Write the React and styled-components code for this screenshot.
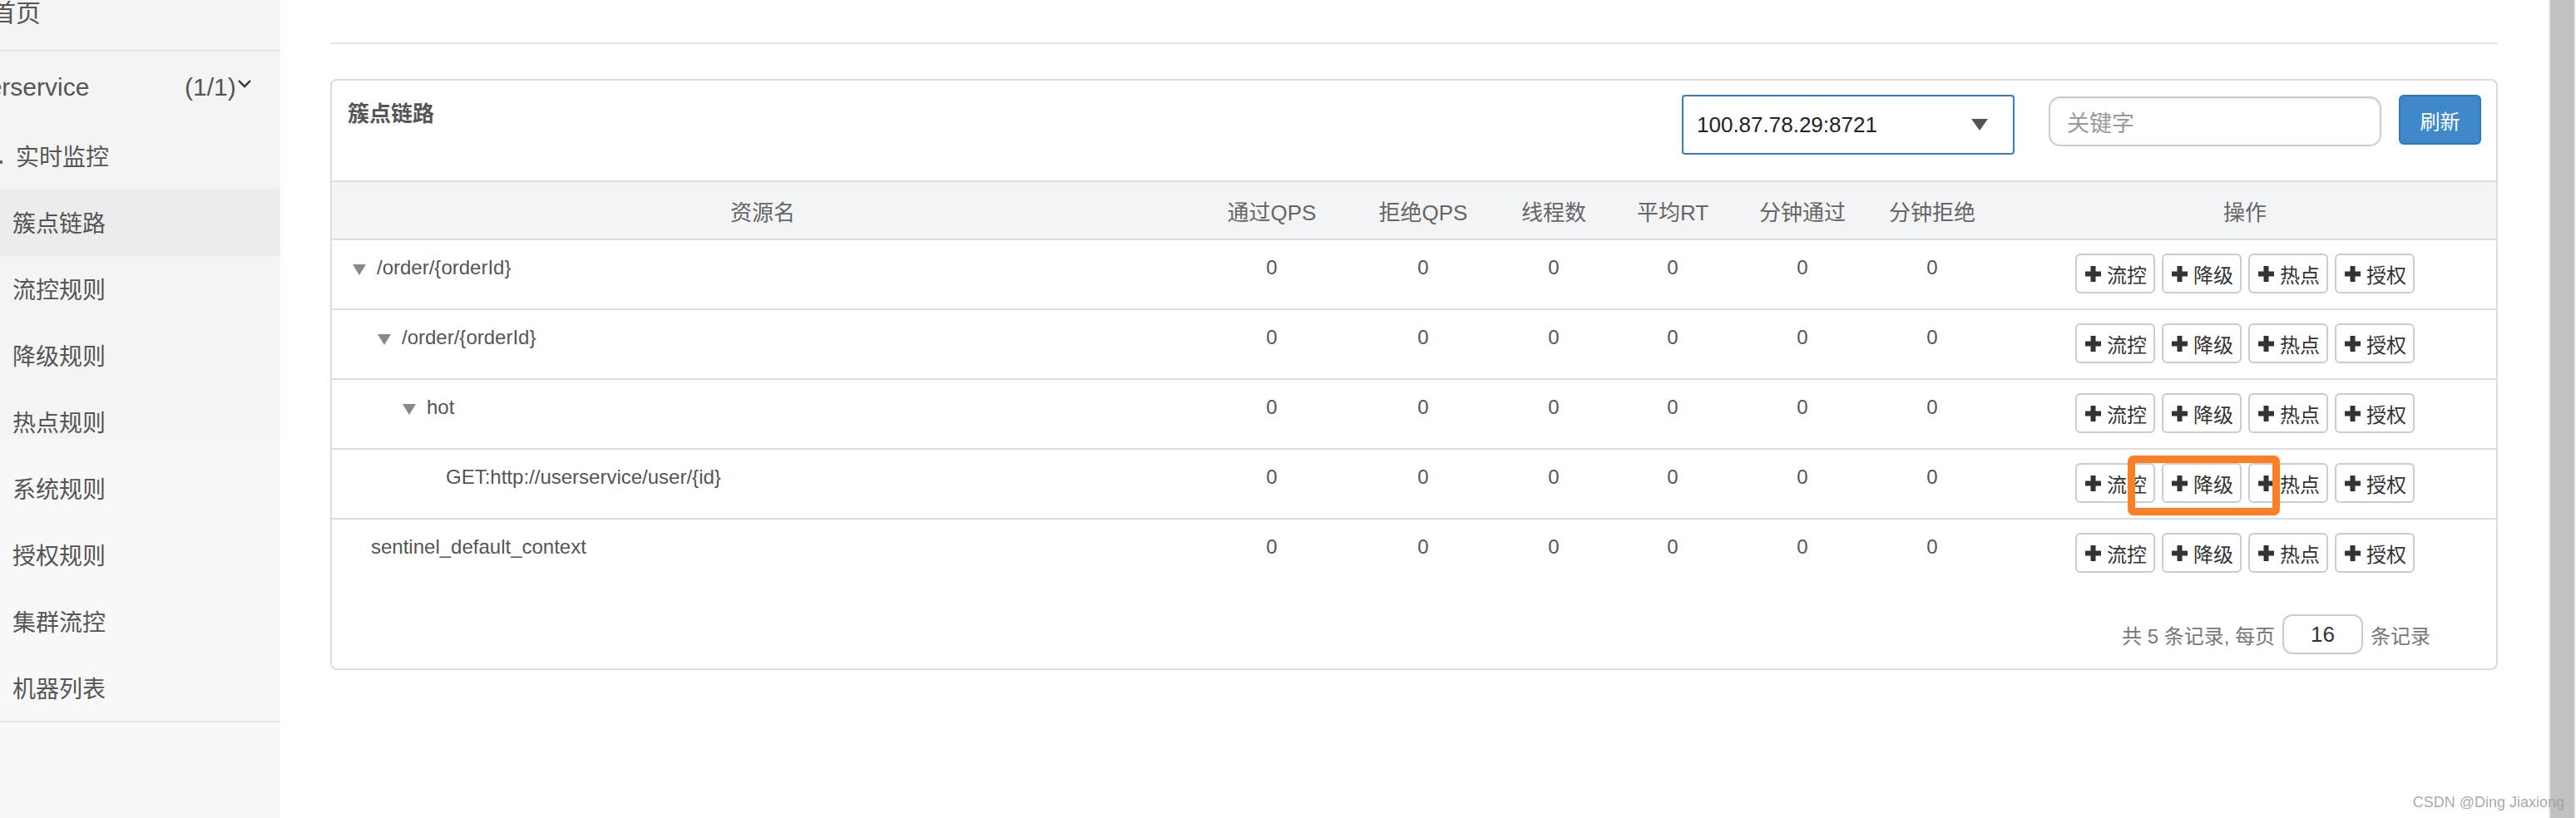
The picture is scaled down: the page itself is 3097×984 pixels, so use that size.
import React from "react";
import styled, { createGlobalStyle } from "styled-components";

const GlobalStyle = createGlobalStyle`
  html, body {
    margin: 0;
    padding: 0;
    width: 3097px;
    height: 984px;
    overflow: hidden;
    background: #ffffff;
  }
  * { box-sizing: border-box; }
  body {
    font-family: "Liberation Sans", "Noto Sans CJK SC", sans-serif;
    color: #555;
  }
`;

const FONT = `"Liberation Sans", "Noto Sans CJK SC", sans-serif`;

const Page = styled.div`
  position: relative;
  display: flex;
  width: 3097px;
  height: 984px;
  overflow: hidden;
  font-family: ${FONT};
`;

/* ---------------- Sidebar ---------------- */
const Sidebar = styled.aside`
  width: 337px;
  flex: none;
  overflow: hidden;
  background: linear-gradient(to bottom, #f4f4f4 0, #f4f4f4 528px, #f8f8f8 528px);
  display: flex;
  flex-direction: column;
`;

const HomeRow = styled.div`
  height: 60px;
  flex: none;
  font-size: 30px;
  line-height: 32px;
  color: #555;
  margin-left: -11px;
  white-space: nowrap;
`;

const Divider = styled.div`
  height: 2px;
  flex: none;
  background: #e5e5e5;
`;

const ServiceRow = styled.div`
  height: 85px;
  flex: none;
  display: flex;
  align-items: flex-start;
  padding-top: 25px;
  font-size: 30px;
  line-height: 36px;
  color: #555;
  white-space: nowrap;
`;

const ServiceName = styled.span`
  width: 268px;
  margin-left: -46px;
  flex: none;
`;

const ServiceCount = styled.span`
  flex: none;
`;

const Chevron = styled.svg`
  flex: none;
  margin-top: 8px;
  margin-left: 1px;
`;

const NavItem = styled.div`
  height: 80px;
  flex: none;
  display: flex;
  align-items: center;
  padding-left: ${(p) => (p.$icon ? 0 : 15)}px;
  font-size: 28px;
  color: #555;
  background: ${(p) => (p.$active ? "#ececec" : "transparent")};
  white-space: nowrap;
`;

const IconStub = styled.span`
  width: 3px;
  height: 4px;
  background: #666;
  margin-top: 16px;
  margin-right: 16px;
  flex: none;
`;

/* ---------------- Main ---------------- */
const Main = styled.main`
  flex: 1;
  min-width: 0;
  background: #fff;
  padding: 51px 61px 0 60px;
`;

const TopRule = styled.div`
  height: 2px;
  background: #e5e5e5;
`;

const Panel = styled.section`
  margin-top: 42px;
  border: 2px solid #dddddd;
  border-radius: 8px;
  background: #fff;
`;

const PanelHeader = styled.div`
  height: 120px;
  display: flex;
  align-items: flex-start;
  padding: 0 18px 0 19px;
`;

const PanelTitle = styled.h3`
  margin: 20px 0 0 0;
  font-size: 26px;
  line-height: 40px;
  font-weight: bold;
  color: #555;
  flex: 1;
`;

const Select = styled.div`
  margin-top: 17px;
  width: 400px;
  height: 72px;
  border: 2px solid #3a7cc0;
  border-radius: 4px;
  display: flex;
  align-items: center;
  justify-content: space-between;
  padding: 0 30px 0 16px;
  font-size: 26px;
  color: #222;
  box-shadow: inset 0 1px 2px rgba(0, 0, 0, 0.08);
`;

const SearchInput = styled.div`
  margin-top: 19px;
  margin-left: 41px;
  width: 400px;
  height: 60px;
  border: 2px solid #cccccc;
  border-radius: 14px;
  display: flex;
  align-items: center;
  padding-left: 20px;
  font-size: 27px;
  color: #999;
  box-shadow: inset 0 2px 2px rgba(0, 0, 0, 0.06);
`;

const RefreshButton = styled.button`
  margin-top: 17px;
  margin-left: 21px;
  width: 99px;
  height: 60px;
  border: 2px solid #3077b8;
  border-radius: 6px;
  background: #3f89ca;
  color: #fff;
  font-family: ${FONT};
  font-size: 24px;
  padding: 0;
`;

const COLS = "1036px 188px 176px 138px 148px 164px 148px 1fr";

const HeadRow = styled.div`
  display: grid;
  grid-template-columns: ${COLS};
  height: 72px;
  border-top: 2px solid #dddddd;
  border-bottom: 2px solid #dddddd;
  background: #f3f4f5;
  align-items: center;
`;

const HeadCell = styled.div`
  text-align: center;
  font-size: 26px;
  color: #666;
`;

const Row = styled.div`
  display: grid;
  grid-template-columns: ${COLS};
  height: ${(p) => (p.$last ? 82 : 84)}px;
  border-bottom: ${(p) => (p.$last ? "none" : "2px solid #dddddd")};
  align-items: start;
`;

const NameCell = styled.div`
  display: flex;
  align-items: center;
  padding-top: 16px;
  padding-left: ${(p) => 25 + p.$level * 30}px;
  font-size: 24px;
  line-height: 34px;
  color: #555;
  white-space: nowrap;
`;

const NamePad = styled.span`
  width: 22px;
  flex: none;
`;

const Arrow = styled.svg`
  flex: none;
  margin-right: 13px;
  margin-top: 4px;
`;

const NumCell = styled.div`
  padding-top: 16px;
  text-align: center;
  font-size: 24px;
  line-height: 34px;
  color: #555;
`;

const ActionCell = styled.div`
  padding-top: 16px;
  display: flex;
  justify-content: center;
  gap: 8px;
`;

const ActionButton = styled.button`
  position: relative;
  width: 96px;
  height: 48px;
  border: 2px solid #cccccc;
  border-radius: 6px;
  background: #fff;
  display: flex;
  align-items: center;
  padding: 0 0 0 10px;
  font-family: ${FONT};
  font-size: 24px;
  color: #333;
  gap: 7px;
`;

const Highlight = styled.span`
  position: absolute;
  left: -43px;
  top: -11px;
  width: 183px;
  height: 72px;
  border: 9px solid #fd7f25;
  border-radius: 7px;
  z-index: 2;
  pointer-events: none;
`;

const Pager = styled.div`
  display: flex;
  justify-content: flex-end;
  align-items: center;
  gap: 9px;
  padding: 32px 79px 17px 0;
  font-size: 24px;
  color: #777;
`;

const PageSize = styled.div`
  width: 97px;
  height: 48px;
  border: 2px solid #cccccc;
  border-radius: 12px;
  display: flex;
  align-items: center;
  justify-content: center;
  font-size: 26px;
  color: #333;
`;

const ScrollBar = styled.div`
  width: 33px;
  flex: none;
  background: #c1c1c1;
  border-left: 2px solid #e9e9e9;
  border-right: 2px solid #f1f1f1;
`;

const Watermark = styled.div`
  position: absolute;
  right: 14px;
  bottom: 8px;
  font-size: 18px;
  line-height: 22px;
  color: rgba(160, 160, 160, 0.9);
  font-family: ${FONT};
  white-space: nowrap;
`;

const PlusIcon = () => (
  <svg width="19" height="19" viewBox="0 0 19 19">
    <path d="M6.5 0h6v6.5H19v6h-6.5V19h-6v-6.5H0v-6h6.5z" fill="#333" />
  </svg>
);

const TreeArrow = () => (
  <Arrow width="16" height="13" viewBox="0 0 16 13">
    <path d="M0 0h16L8 13z" fill="#888" />
  </Arrow>
);

const navItems = ["簇点链路", "流控规则", "降级规则", "热点规则", "系统规则", "授权规则", "集群流控", "机器列表"];

const rows = [
  { name: "/order/{orderId}", level: 0, arrow: true },
  { name: "/order/{orderId}", level: 1, arrow: true },
  { name: "hot", level: 2, arrow: true },
  { name: "GET:http://userservice/user/{id}", level: 3, arrow: false, mark: true },
  { name: "sentinel_default_context", level: 0, arrow: false },
];

const headers = ["资源名", "通过QPS", "拒绝QPS", "线程数", "平均RT", "分钟通过", "分钟拒绝", "操作"];
const actions = ["流控", "降级", "热点", "授权"];

export default function App() {
  return (
    <>
      <GlobalStyle />
      <Page>
        <Sidebar>
          <HomeRow>首页</HomeRow>
          <Divider />
          <ServiceRow>
            <ServiceName>userservice</ServiceName>
            <ServiceCount>(1/1)</ServiceCount>
            <Chevron width="18" height="11" viewBox="0 0 18 11">
              <polyline points="2,2 9,9 16,2" fill="none" stroke="#333" strokeWidth="2.4" />
            </Chevron>
          </ServiceRow>
          <NavItem $icon>
            <IconStub />
            实时监控
          </NavItem>
          {navItems.map((t, i) => (
            <NavItem key={t} $active={i === 0}>
              {t}
            </NavItem>
          ))}
          <Divider />
        </Sidebar>

        <Main>
          <TopRule />
          <Panel>
            <PanelHeader>
              <PanelTitle>簇点链路</PanelTitle>
              <Select>
                <span>100.87.78.29:8721</span>
                <svg width="20" height="14" viewBox="0 0 20 14">
                  <path d="M0 0h20L10 14z" fill="#555" />
                </svg>
              </Select>
              <SearchInput>关键字</SearchInput>
              <RefreshButton>刷新</RefreshButton>
            </PanelHeader>

            <HeadRow>
              {headers.map((h) => (
                <HeadCell key={h}>{h}</HeadCell>
              ))}
            </HeadRow>

            {rows.map((r, i) => (
              <Row key={i} $last={i === rows.length - 1}>
                <NameCell $level={r.level}>
                  {r.arrow ? <TreeArrow /> : <NamePad />}
                  {r.name}
                </NameCell>
                {[0, 1, 2, 3, 4, 5].map((k) => (
                  <NumCell key={k}>0</NumCell>
                ))}
                <ActionCell>
                  {actions.map((a) => (
                    <ActionButton key={a}>
                      <PlusIcon />
                      {a}
                      {r.mark && a === "降级" ? <Highlight /> : null}
                    </ActionButton>
                  ))}
                </ActionCell>
              </Row>
            ))}

            <Pager>
              <span>共 5 条记录, 每页</span>
              <PageSize>16</PageSize>
              <span>条记录</span>
            </Pager>
          </Panel>
        </Main>

        <ScrollBar />
        <Watermark>CSDN @Ding Jiaxiong</Watermark>
      </Page>
    </>
  );
}
